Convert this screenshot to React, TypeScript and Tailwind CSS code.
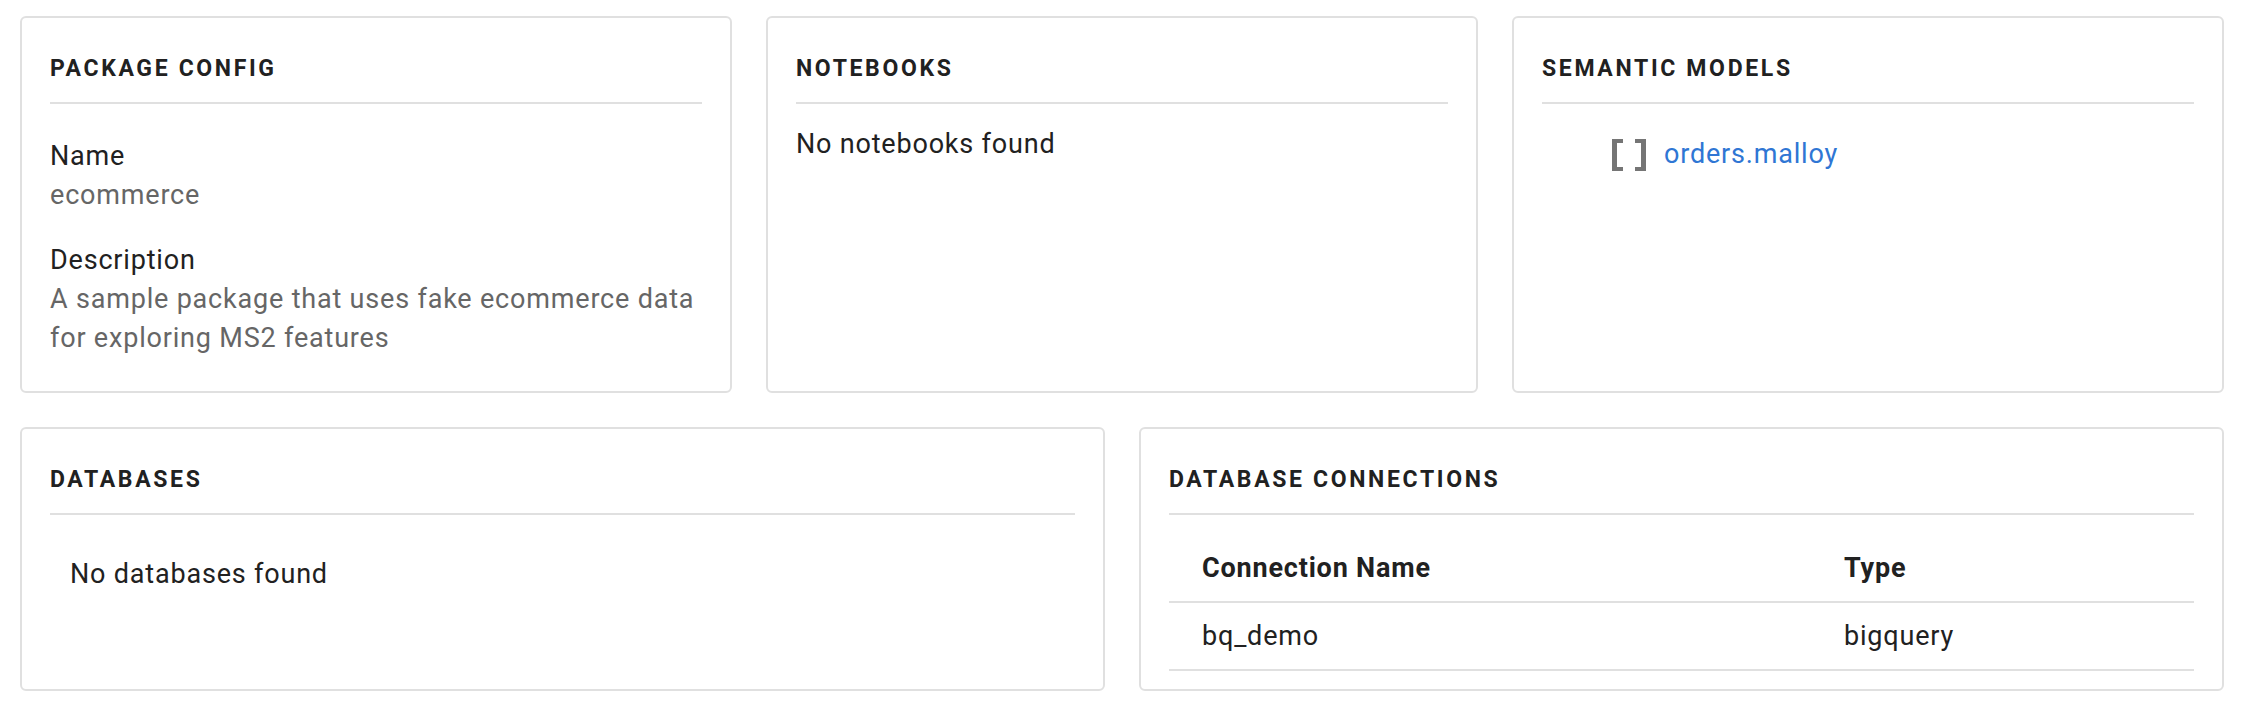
import React from 'react';

const Card = ({ title, className = '', children }: { title: string; className?: string; children: React.ReactNode }) => (
  <div className={`border-2 border-[#e0e0e0] rounded-[6px] bg-white px-[28px] pt-[34px] ${className}`}>
    <h2 className="text-[23px] leading-[34px] font-bold tracking-[0.115em] uppercase text-[#212121]">{title}</h2>
    <div className="h-[2px] bg-[#e0e0e0] mt-[16px]" />
    {children}
  </div>
);

const BracketsIcon = () => (
  <svg width="34" height="32" viewBox="0 0 34 32" className="shrink-0">
    <path d="M0 0h11v4H5v24h6v4H0z M34 0H23v4h6v24h-6v4h11z" fill="#757575" />
  </svg>
);

export default function App() {
  return (
    <div className="min-h-screen bg-white px-[20px] pt-[16px] font-['Roboto',sans-serif] text-[27px] leading-[39px] tracking-[0.03em] text-[#212121]">
      <div className="grid grid-cols-3 gap-[34px]">
        <Card title="Package Config" className="pb-[33px]">
          <dl className="pt-[21px] mt-[12px]">
            <dt>Name</dt>
            <dd className="text-[#666666]">ecommerce</dd>
            <dt className="mt-[26px]">Description</dt>
            <dd className="text-[#666666]">A sample package that uses fake ecommerce data for exploring MS2 features</dd>
          </dl>
        </Card>
        <Card title="Notebooks">
          <p className="pt-[21px]">No notebooks found</p>
        </Card>
        <Card title="Semantic Models">
          <ul className="pt-[21px]">
            <li className="mt-[10px] ml-[70px] flex items-center gap-[18px] h-[39px]">
              <BracketsIcon />
              <a className="text-[#2f76d4]">orders.malloy</a>
            </li>
          </ul>
        </Card>
      </div>

      <div className="grid grid-cols-2 gap-[34px] mt-[34px]">
        <Card title="Databases">
          <p className="pt-[40px] ml-[20px]">No databases found</p>
        </Card>
        <Card title="Database Connections" className="pb-[18px]">
          <table className="w-full mt-[22px] border-collapse">
            <thead>
              <tr className="border-b-2 border-[#e0e0e0]">
                <th className="w-[642px] text-left font-bold pl-[33px] pt-[12px] pb-[13px]">Connection Name</th>
                <th className="text-left font-bold pl-[33px] pt-[12px] pb-[13px]">Type</th>
              </tr>
            </thead>
            <tbody>
              <tr className="border-b-2 border-[#e0e0e0]">
                <td className="pl-[33px] pt-[14px] pb-[13px]">bq_demo</td>
                <td className="pl-[33px] pt-[14px] pb-[13px]">bigquery</td>
              </tr>
            </tbody>
          </table>
        </Card>
      </div>
    </div>
  );
}
